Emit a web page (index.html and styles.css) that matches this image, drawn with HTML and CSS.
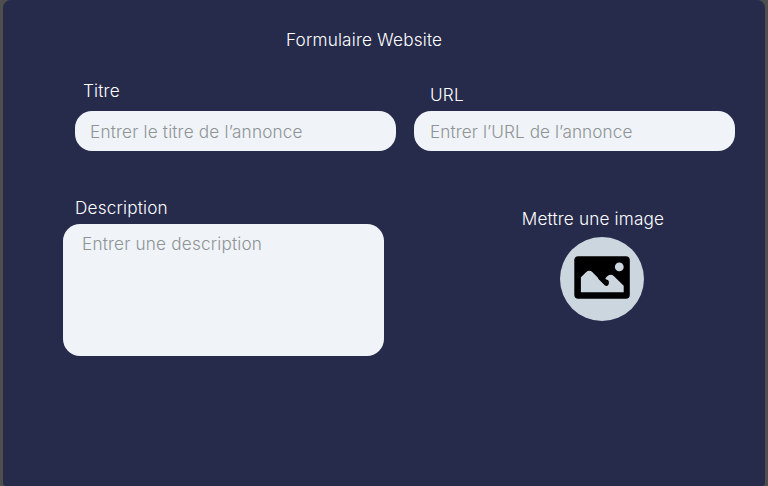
FILE: index.html
```html
<!DOCTYPE html>
<html lang="fr">
<head>
<meta charset="utf-8">
<title>Formulaire Website</title>
<link rel="stylesheet" href="styles.css">
</head>
<body>
<main class="panel">
  <h1 class="title">Formulaire Website</h1>
  <div class="row">
    <div class="field field-title">
      <label for="titre">Titre</label>
      <input id="titre" type="text" placeholder="Entrer le titre de l’annonce">
    </div>
    <div class="field field-url">
      <label for="url">URL</label>
      <input id="url" type="text" placeholder="Entrer l’URL de l’annonce">
    </div>
  </div>
  <div class="row row-details">
    <div class="field field-description">
      <label for="description">Description</label>
      <textarea id="description" placeholder="Entrer une description"></textarea>
    </div>
    <div class="upload">
      <span class="upload-label">Mettre une image</span>
      <button class="upload-button" type="button" aria-label="Mettre une image">
        <svg viewBox="0 0 84 84" width="84" height="84">
          <rect x="14.3" y="19.2" width="55.5" height="42.6" rx="4"/>
          <circle class="cut" cx="59.3" cy="29.9" r="4.4"/>
          <path class="cut" d="M20.9 55.3V40.3L26 35.2Q29.3 32.3 32.5 35.2L43.6 46.6Q46.2 48.9 48.3 46.8Q49.7 44.4 47.8 43Q46.3 42.4 45.3 42.2Q45.3 40.7 47.5 39Q51 36.6 54 39.2L63.7 48.8V55.3Z"/>
          <path d="M38 41.5L45 48.6Q47 49.6 48.3 48Q49.5 46 48 44.4L45.2 42.2L43 38Z"/>
        </svg>
      </button>
    </div>
  </div>
</main>
</body>
</html>
```
FILE: styles.css
```css
* {
  box-sizing: border-box;
}

body {
  margin: 0;
  height: 486px;
  padding: 0 3px;
  overflow: hidden;
  background: #4e4e4e;
  font: 300 17.2px/20px Inter, sans-serif;
  letter-spacing: 0.17px;
  color: #fff;
}

.panel {
  height: 486px;
  padding: 30px 30px 0 60px;
  border-radius: 8px 8px 3px 3px;
  background: #262a4b;
}

.title {
  margin: 0 0 31px 223px;
  font: inherit;
}

.row {
  display: flex;
  justify-content: space-between;
}

.row .field-title {
  margin-left: 12px;
}

.field {
  display: flex;
  flex-direction: column;
  justify-content: flex-end;
  width: 321px;
}

.field label {
  margin: 0 0 6px 16px;
}

.field-title label {
  margin: 0 0 10px 8px;
}

.field-description label {
  margin-left: 12px;
}

input,
textarea {
  display: block;
  width: 321px;
  margin: 0;
  border: 0;
  outline: 0;
  resize: none;
  background: #f0f4f8;
  color: #262a4b;
  font: inherit;
  letter-spacing: inherit;
}

input {
  height: 40px;
  padding: 0 15px;
  border-radius: 17px;
}

.field-url input {
  padding-left: 16px;
  letter-spacing: 0.08px;
}

textarea {
  height: 132px;
  padding: 10px 19px;
  border-radius: 17px;
}

::placeholder {
  color: #8e9396;
  opacity: 1;
}

.row-details {
  margin-top: 47px;
}

.upload {
  display: flex;
  flex-direction: column;
  align-items: center;
  width: 144px;
  margin: 11px 70px 0 0;
}

.upload-label {
  white-space: nowrap;
}

.upload-button {
  width: 84px;
  height: 84px;
  margin: 8px -18px 0 0;
  padding: 0;
  border: 0;
  border-radius: 50%;
  background: #ccd6df;
}

.upload-button svg {
  display: block;
}

.cut {
  fill: #ccd6df;
}
```
